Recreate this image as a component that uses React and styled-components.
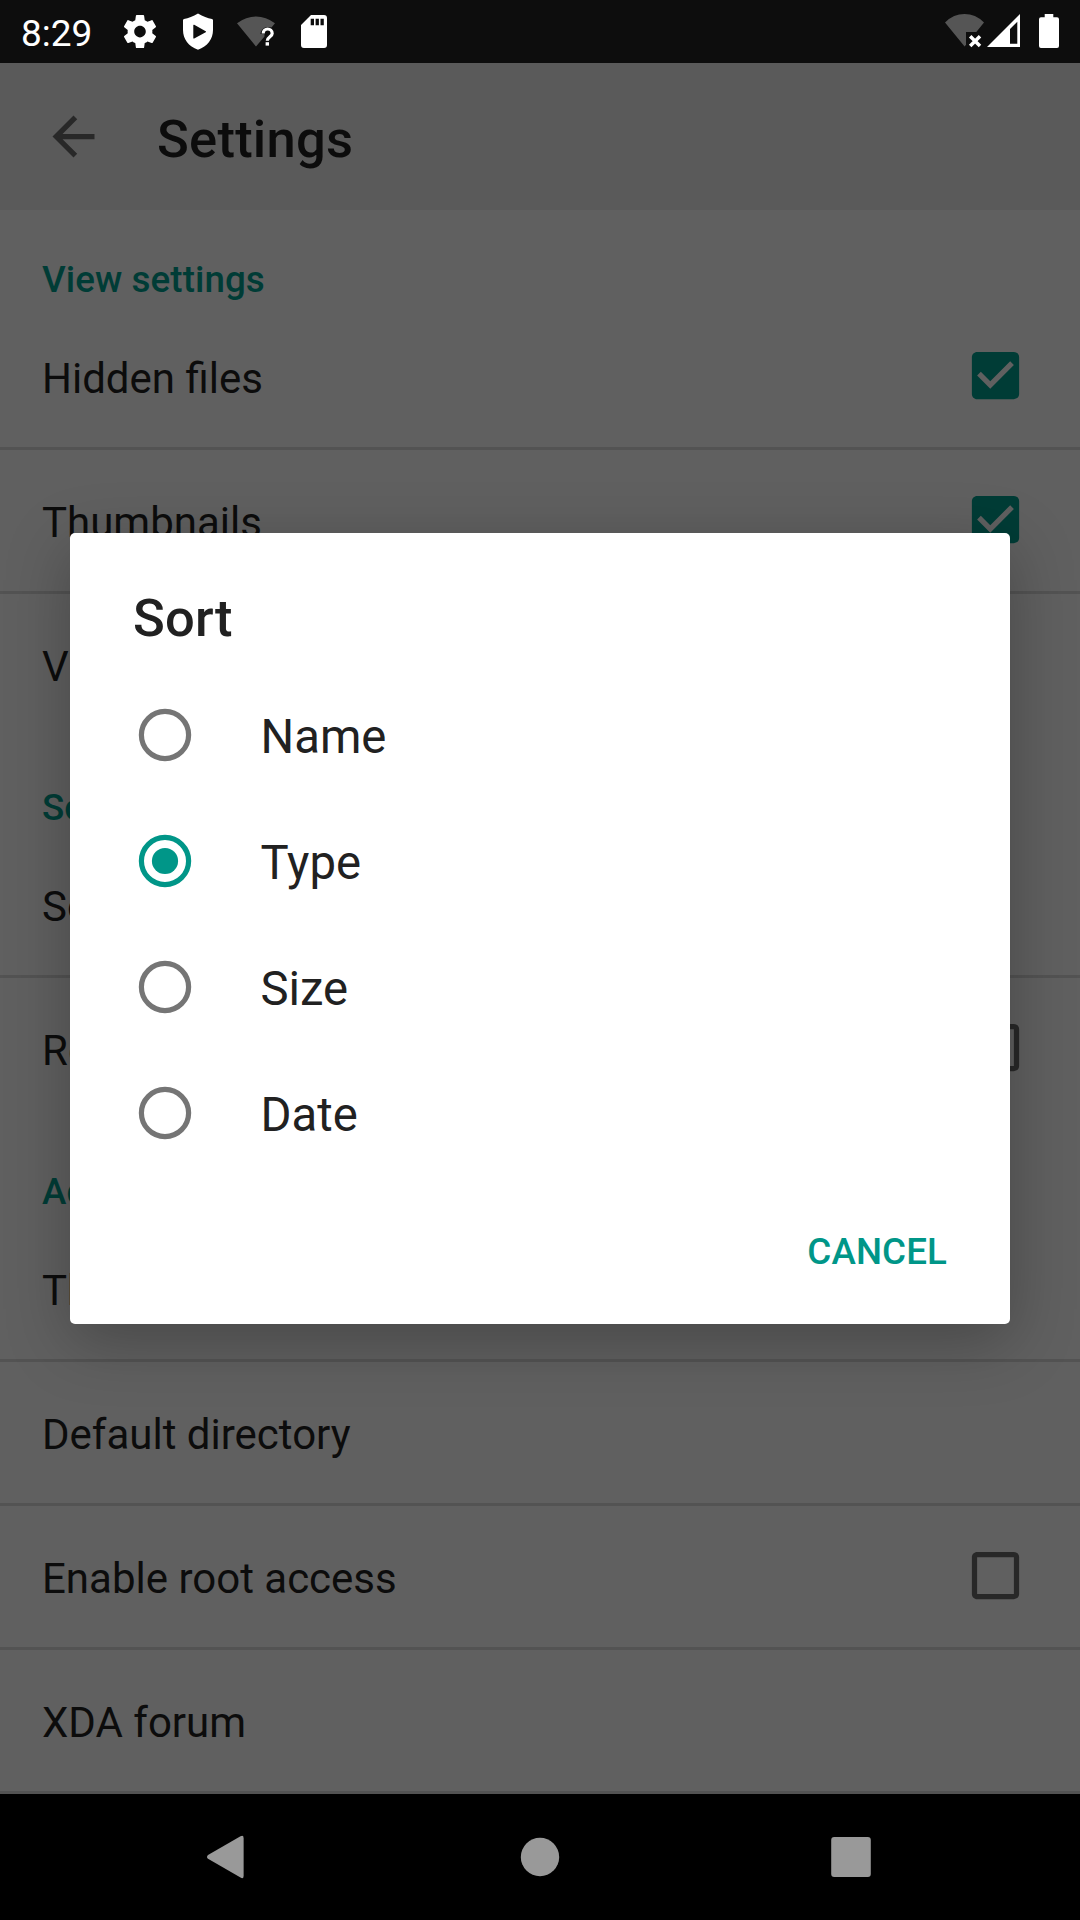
import React, { useState } from "react";
import styled, { createGlobalStyle } from "styled-components";

const GlobalStyle = createGlobalStyle`
  * { box-sizing: border-box; }
  body { margin: 0; background: #000; }
`;

const Screen = styled.div`
  position: relative;
  display: flex;
  flex-direction: column;
  width: 1080px;
  height: 1920px;
  overflow: hidden;
  background: #606060;
  color: #0c0c0c;
  font-family: Roboto, "Noto Sans", sans-serif;
`;

const StatusBar = styled.header`
  display: flex;
  justify-content: space-between;
  height: 63px;
  padding: 0 20px 0 21px;
  background: #0d0d0d;
`;

const StatusGroup = styled.div`
  display: flex;
  align-items: center;
`;

const Clock = styled.span`
  width: 94px;
  padding-top: 3px;
  color: #fff;
  font-size: 37px;
  line-height: 59px;
`;

const StatusIcon = styled.svg`
  display: block;
  flex: none;
  width: ${(p) => p.$w}px;
  height: 63px;
  margin-left: ${(p) => p.$gap || 0}px;
  fill: #fff;
`;

const Toolbar = styled.div`
  display: flex;
  align-items: center;
  height: 147px;
  padding-left: 42px;
  background: #5a5a5a;
`;

const BackIcon = styled.svg`
  width: 63px;
  height: 63px;
  fill: #282828;
`;

const ToolbarTitle = styled.h1`
  margin: 0 0 0 52px;
  padding-top: 4px;
  font-size: 52.5px;
  line-height: 62px;
  font-weight: 500;
  letter-spacing: 0.25px;
`;

const SettingsList = styled.main`
  flex: 1;
`;

const Category = styled.h2`
  height: 96px;
  margin: 0;
  padding: 43px 42px 0;
  color: #003c36;
  font-size: 36.75px;
  line-height: 53px;
  font-weight: 500;
  letter-spacing: 0.08px;
`;

const Row = styled.div`
  display: flex;
  align-items: center;
  justify-content: space-between;
  height: 144px;
  padding: 0 53px 0 42px;
  border-bottom: 3px solid ${(p) => (p.$divider ? "#535353" : "transparent")};
`;

const RowLabel = styled.span`
  padding-top: 4px;
  font-size: 42px;
  line-height: 50px;
`;

const CheckIcon = styled.svg`
  width: 63px;
  height: 63px;
  margin-top: -2px;
  fill: ${(p) => (p.$on ? "#003c36" : "#282828")};
`;

const NavBar = styled.nav`
  display: flex;
  justify-content: space-between;
  align-items: center;
  height: 126px;
  padding: 0 207px 0 205px;
  background: #000;
`;

const NavIcon = styled.svg`
  width: 44px;
  height: 44px;
  fill: #999;
`;

const Dialog = styled.section`
  position: absolute;
  left: 70px;
  top: 533px;
  width: 940px;
  height: 791px;
  border-radius: 5px;
  background: #fff;
  color: #212121;
  box-shadow: 0 16px 64px rgba(0, 0, 0, 0.27);
`;

const DialogTitle = styled.h2`
  height: 139px;
  margin: 0;
  padding: 31px 63px 0;
  font-size: 52.5px;
  line-height: 108px;
  font-weight: 500;
  letter-spacing: 0.2px;
`;

const Option = styled.div`
  display: flex;
  align-items: center;
  height: 126px;
  padding-left: 68px;
`;

const RadioIcon = styled.svg`
  width: 54px;
  height: 54px;
  fill: ${(p) => (p.$on ? "#009688" : "none")};
  stroke: ${(p) => (p.$on ? "#009688" : "#757575")};
`;

const OptionLabel = styled.span`
  padding: 4px 0 0 68.5px;
  font-size: 47.25px;
  line-height: 56px;
`;

const DialogActions = styled.div`
  display: flex;
  align-items: center;
  justify-content: flex-end;
  height: 148px;
  padding: 3px 63px 0;
`;

const TextButton = styled.button`
  padding: 0;
  border: 0;
  background: none;
  color: #009688;
  font: 500 36.75px/44px Roboto, "Noto Sans", sans-serif;
  letter-spacing: 0.1px;
`;

const SECTIONS = [
  {
    title: "View settings",
    rows: [
      { label: "Hidden files", checked: true },
      { label: "Thumbnails", checked: true },
      { label: "View" },
    ],
  },
  {
    title: "Sort settings",
    rows: [{ label: "Sort" }, { label: "Reverse", checked: false }],
  },
  {
    title: "Advanced",
    rows: [
      { label: "Theme" },
      { label: "Default directory" },
      { label: "Enable root access", checked: false },
      { label: "XDA forum" },
    ],
  },
];

const OPTIONS = ["Name", "Type", "Size", "Date"];

const CHECKED =
  "M19 3H5c-1.11 0-2 .9-2 2v14c0 1.1.89 2 2 2h14c1.11 0 2-.9 2-2V5c0-1.1-.89-2-2-2zm-9 14l-5-5 1.41-1.41L10 14.17l7.59-7.59L19 8l-9 9z";
const UNCHECKED =
  "M19 5v14H5V5h14m0-2H5c-1.1 0-2 .9-2 2v14c0 1.1.9 2 2 2h14c1.1 0 2-.9 2-2V5c0-1.1-.9-2-2-2z";
const GEAR =
  "M19.43 12.98c.04-.32.07-.64.07-.98s-.03-.66-.07-.98l2.11-1.65c.19-.15.24-.42.12-.64l-2-3.46c-.12-.22-.39-.3-.61-.22l-2.49 1c-.52-.4-1.08-.73-1.69-.98l-.38-2.65C14.46 2.18 14.25 2 14 2h-4c-.25 0-.46.18-.49.42l-.38 2.65c-.61.25-1.17.59-1.69.98l-2.49-1c-.23-.09-.49 0-.61.22l-2 3.46c-.13.22-.07.49.12.64l2.11 1.65c-.04.32-.07.65-.07.98s.03.66.07.98l-2.11 1.65c-.19.15-.24.42-.12.64l2 3.46c.12.22.39.3.61.22l2.49-1c.52.4 1.08.73 1.69.98l.38 2.65c.03.24.24.42.49.42h4c.25 0 .46-.18.49-.42l.38-2.65c.61-.25 1.17-.59 1.69-.98l2.49 1c.23.09.49 0 .61-.22l2-3.46c.12-.22.07-.49-.12-.64l-2.11-1.65zM12 15.5c-1.93 0-3.5-1.57-3.5-3.5s1.57-3.5 3.5-3.5 3.5 1.57 3.5 3.5-1.57 3.5-3.5 3.5z";

function StatusIcons() {
  return (
    <StatusBar>
      <StatusGroup>
        <Clock>8:29</Clock>
        <StatusIcon $w={50} viewBox="115 0 50 63">
          <path transform="translate(120.2 11.8) scale(1.65)" d={GEAR} />
        </StatusIcon>
        <StatusIcon $w={40} $gap={13} viewBox="178 0 40 63">
          <path
            fillRule="evenodd"
            d="M198 13.6C203 16.6 207.500 18.300 212 19.100Q213 19.300 213 20.300V30C213 39 207.500 46.500 198 49.800C188.500 46.500 183 39 183 30V20.300Q183 19.300 184 19.100C188.500 18.300 193 16.600 198 13.600ZM193.300 25.200V38Q193.300 38.800 194.200 38.400L205.700 32.200Q206.500 31.700 205.700 31.200L194.200 24.800Q193.300 24.400 193.300 25.200Z"
          />
        </StatusIcon>
        <StatusIcon $w={50} $gap={14} viewBox="232 0 50 63">
          <path
            fill="#555"
            d="M237 23.200Q246 16.400 256 16.400T275 23.200L271.500 27.500C266 25.500 261 28.500 260.500 34H264.500V36.500L256 46.600Z"
          />
          <path
            fill="none"
            stroke="#fff"
            strokeWidth="3.200"
            d="M263.200 33.500C263.200 27.500 272.200 27.500 272.200 33.500C272.200 36.800 267.300 36.800 267.300 40.800"
          />
          <rect x="265.600" y="42.200" width="3.400" height="3.400" />
        </StatusIcon>
        <StatusIcon $w={36} $gap={14} viewBox="296 0 36 63">
          <path
            fillRule="evenodd"
            d="M311 15H324Q327 15 327 18V45Q327 48 324 48H304Q301 48 301 45V25ZM310.700 18.800V25.300H314V18.800ZM315.600 18.800V25.300H318.900V18.800ZM320.500 18.800V25.300H323.800V18.800Z"
          />
        </StatusIcon>
      </StatusGroup>
      <StatusGroup>
        <StatusIcon $w={45} viewBox="940 0 45 63">
          <path
            fill="#555"
            d="M945 22.400Q953.500 14 964.500 14T984 22.400L976.300 32H966V44.700L964.600 46.500Z"
          />
          <path
            fill="none"
            stroke="#fff"
            strokeWidth="3.500"
            d="M970.200 36.200L980 46M980 36.200L970.200 46"
          />
        </StatusIcon>
        <StatusIcon $w={40} viewBox="985 0 40 63">
          <path
            fillRule="evenodd"
            d="M987 47L1020 14V47ZM1010 29V43.800H1017.300V21.700Z"
          />
        </StatusIcon>
        <StatusIcon $w={25} $gap={10} viewBox="1035 0 25 63">
          <path d="M1044.700 14H1053.300V17.300H1057Q1059 17.300 1059 19.300V46Q1059 48 1057 48H1041Q1039 48 1039 46V19.300Q1039 17.300 1041 17.300H1044.700Z" />
        </StatusIcon>
      </StatusGroup>
    </StatusBar>
  );
}

function SettingRow({ label, checked, divider }) {
  return (
    <Row $divider={divider}>
      <RowLabel>{label}</RowLabel>
      {checked !== undefined && (
        <CheckIcon $on={checked} viewBox="0 0 24 24">
          <path d={checked ? CHECKED : UNCHECKED} />
        </CheckIcon>
      )}
    </Row>
  );
}

function Radio({ on }) {
  return (
    <RadioIcon $on={on} viewBox="0 0 54 54">
      <circle cx="27" cy="27" r="23.6" fill="none" strokeWidth="5.2" />
      {on && <circle cx="27" cy="27" r="13.1" stroke="none" />}
    </RadioIcon>
  );
}

export default function App() {
  const [selected, setSelected] = useState("Type");
  return (
    <>
      <GlobalStyle />
      <Screen>
        <StatusIcons />
        <Toolbar>
          <BackIcon viewBox="0 0 24 24">
            <path d="M20 11H7.830l5.590-5.590L12 4l-8 8 8 8 1.410-1.410L7.830 13H20v-2z" />
          </BackIcon>
          <ToolbarTitle>Settings</ToolbarTitle>
        </Toolbar>
        <SettingsList>
          {SECTIONS.map((s, si) => (
            <React.Fragment key={s.title}>
              <Category>{s.title}</Category>
              {s.rows.map((r, i) => (
                <SettingRow
                  key={r.label}
                  {...r}
                  divider={i < s.rows.length - 1 || si === SECTIONS.length - 1}
                />
              ))}
            </React.Fragment>
          ))}
        </SettingsList>
        <NavBar>
          <NavIcon viewBox="205 1835 44 44">
            <path d="M240.500 1836.200Q243.600 1834.500 243.600 1838V1876Q243.600 1879.300 240.500 1877.600L208 1858.800Q206 1857 208 1855Z" />
          </NavIcon>
          <NavIcon viewBox="517 1835 44 44">
            <circle cx="540" cy="1857" r="19.200" />
          </NavIcon>
          <NavIcon viewBox="829 1835 44 44">
            <rect x="831.200" y="1837" width="39.600" height="40" rx="3" />
          </NavIcon>
        </NavBar>
        <Dialog role="dialog" aria-label="Sort">
          <DialogTitle>Sort</DialogTitle>
          {OPTIONS.map((o) => (
            <Option key={o} onClick={() => setSelected(o)}>
              <Radio on={selected === o} />
              <OptionLabel>{o}</OptionLabel>
            </Option>
          ))}
          <DialogActions>
            <TextButton>CANCEL</TextButton>
          </DialogActions>
        </Dialog>
      </Screen>
    </>
  );
}
